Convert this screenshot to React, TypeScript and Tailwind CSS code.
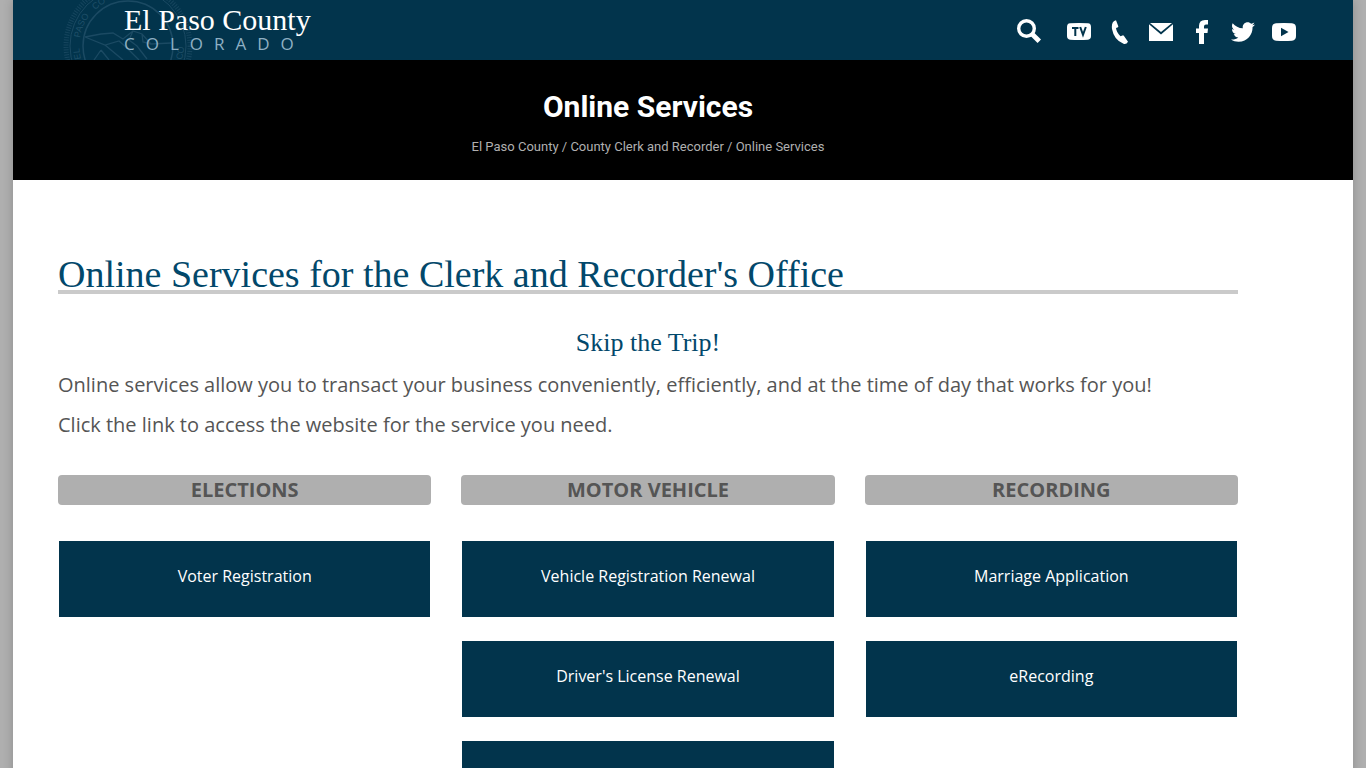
import React from 'react';
import { FaTwitter } from 'react-icons/fa';

const columns = [
  { title: 'ELECTIONS', links: ['Voter Registration'] },
  {
    title: 'MOTOR VEHICLE',
    links: ['Vehicle Registration Renewal', "Driver's License Renewal", ''],
  },
  { title: 'RECORDING', links: ['Marriage Application', 'eRecording'] },
];

function Seal() {
  return (
    <svg
      viewBox="0 0 130 60"
      className="absolute left-[50px] top-0 h-[60px] w-[130px]"
      fill="none"
      stroke="#1b4a63"
      aria-hidden="true"
    >
      <defs>
        <path id="sealEl" d="M18 59 A49 49 0 0 1 17 38" />
        <path id="sealPaso" d="M17 38 A49 49 0 0 1 36 6" />
        <path id="sealCounty" d="M32 10 A49 49 0 0 1 94 6" />
        <path id="sealCo" d="M119 60 A56 56 0 0 0 120 36" />
      </defs>
      <circle cx="65" cy="46" r="62" strokeWidth="5" strokeDasharray="1 1.5" opacity="0.8" />
      <circle cx="65" cy="46" r="58" strokeWidth="1" />
      <circle cx="65" cy="46" r="45" strokeWidth="1.5" />
      <g fill="#1f4f68" stroke="none" fontSize="9" fontFamily="Liberation Sans, sans-serif">
        <text><textPath href="#sealEl">EL</textPath></text>
        <text><textPath href="#sealPaso">PASO</textPath></text>
        <text><textPath href="#sealCounty">CO</textPath></text>
        <text><textPath href="#sealCo">CO</textPath></text>
      </g>
      <path
        d="M22 37 L38 34 L50 33 L60 39 L70 31 L79 34 L88 44 L108 43 M22 37 L42 45 L56 41 L64 48 L76 60 M70 31 L66 40 L74 46 L84 59 M79 34 L80 42 L88 44 M38 50 L31 60 M38 50 L46 60 M42 45 L60 60"
        strokeWidth="1.3"
      />
    </svg>
  );
}

const iconLinks = [
  {
    label: 'Search',
    className: 'w-6',
    icon: (
      <svg viewBox="0 0 24 24" className="size-6 overflow-visible" fill="none" stroke="currentColor" aria-hidden="true">
        <circle cx="9.5" cy="8.5" r="7.8" strokeWidth="3.4" />
        <path d="M15 14 L22.3 21.3" strokeWidth="4.8" />
      </svg>
    ),
  },
  {
    label: 'TV',
    className: 'ml-[26px] w-6',
    icon: (
      <svg viewBox="0 0 24 24" className="size-6" fill="currentColor" aria-hidden="true">
        <path d="M3 3.3 Q12 2.5 21 3.3 Q24 3.6 24 7 V16 Q24 19.4 21 19.7 Q12 20.5 3 19.7 Q0 19.4 0 16 V7 Q0 3.6 3 3.3Z" />
        <path d="M5 8 H11.5 M8.3 8 V16 M13.2 7 L16 14.8 L18.8 7" fill="none" stroke="#02344c" strokeWidth="2" />
      </svg>
    ),
  },
  {
    label: 'Phone',
    className: 'ml-[17px] w-6',
    icon: (
      <svg viewBox="0 0 24 24" className="size-6" fill="currentColor" aria-hidden="true">
        <path d="M8 0.3 L10.3 6.2 Q10.5 7 9.5 7.4 L8 8 Q8.5 12.5 12.5 16.2 L14.5 15.4 Q15.4 15.1 16 15.9 L20 21.8 Q18.5 24.6 15.5 23.8 Q6 20 4 9 Q3 1.5 8 0.3Z" />
      </svg>
    ),
  },
  {
    label: 'Email',
    className: 'ml-[17px] w-6',
    icon: (
      <svg viewBox="0 0 24 24" className="size-6" fill="currentColor" aria-hidden="true">
        <path d="M1 3 H23 L12 12Z" />
        <path d="M0 4.3 L12 14.5 L24 4.3 V21 H0Z" />
      </svg>
    ),
  },
  {
    label: 'Facebook',
    className: 'ml-[17px] w-6',
    icon: (
      <svg viewBox="0 0 24 24" className="size-6" fill="currentColor" aria-hidden="true">
        <path d="M9 24 V13 H6 V8.5 H9 V6 Q9 0 15 0 H18 V4.5 H16 Q14 4.5 14 6.5 V8.5 H18 L17.5 13 H14 V24Z" />
      </svg>
    ),
  },
  { label: 'Twitter', className: 'ml-[17px] w-6', icon: <FaTwitter className="size-6" /> },
  {
    label: 'YouTube',
    className: 'ml-[17px] w-6',
    icon: (
      <svg viewBox="0 0 24 24" className="size-6" aria-hidden="true">
        <path
          d="M4 3.3 Q12 2.7 20 3.3 Q24 3.6 24 8 V16 Q24 20.4 20 20.7 Q12 21.3 4 20.7 Q0 20.4 0 16 V8 Q0 3.6 4 3.3Z"
          fill="currentColor"
        />
        <path d="M9 7.8 L16.5 12 L9 16.2Z" fill="#02344c" />
      </svg>
    ),
  },
];

export default function App() {
  return (
    <div className="min-h-screen bg-[#afafaf] px-[13px] font-['Open_Sans',sans-serif] text-[#555555]">
      <div className="min-h-screen bg-white shadow-[0_0_10px_rgba(0,0,0,0.2)]">
        <header className="relative flex h-[60px] items-start justify-between overflow-hidden bg-[#02344c] pr-[57px] text-white">
          <Seal />
          <a href="#" className="relative ml-[111px] block pt-1">
            <span className="block font-['Liberation_Serif',serif] text-[30px] leading-8">El Paso County</span>
            <span className="block text-[17px] leading-4 tracking-[11px] text-[#8fb0c3]">COLORADO</span>
          </a>
          <nav className="flex pt-5">
            {iconLinks.map((item) => (
              <a key={item.label} href="#" aria-label={item.label} className={item.className}>
                {item.icon}
              </a>
            ))}
          </nav>
        </header>

        <div className="h-[120px] bg-black pt-[27px] pr-[70px] text-center font-['Roboto',sans-serif]">
          <h1 className="text-[30px] leading-10 font-bold text-white">Online Services</h1>
          <nav className="mt-2 text-[13px] leading-6 text-[#b0b0b0]">
            <a href="#">El Paso County</a> / <a href="#">County Clerk and Recorder</a> / <span>Online Services</span>
          </nav>
        </div>

        <main className="pt-[78px] pr-[115px] pb-12 pl-[45px]">
          <h2 className="border-b-4 border-[#cacaca] font-['Liberation_Serif',serif] text-[38px] leading-8 text-[#02486b]">
            Online Services for the Clerk and Recorder's Office
          </h2>
          <h3 className="mt-[33px] text-center font-['Liberation_Serif',serif] text-[26px] leading-8 text-[#02486b]">
            Skip the Trip!
          </h3>
          <p className="mt-2 text-[20px] leading-[36px]">
            Online services allow you to transact your business conveniently, efficiently, and at the time of day that
            works for you!
          </p>
          <p className="mt-1 text-[20px] leading-[36px]">
            Click the link to access the website for the service you need.
          </p>

          <div className="mt-8 grid grid-cols-3 gap-[30px]">
            {columns.map((col) => (
              <section key={col.title}>
                <h4 className="rounded bg-[#afafaf] text-center text-[20px] leading-[30px] font-bold">{col.title}</h4>
                <div className="mt-9 flex flex-col gap-6 px-px">
                  {col.links.map((text) => (
                    <a
                      key={text}
                      href="#"
                      className="block h-[76px] bg-[#02344c] pt-[23px] text-center text-base leading-6 font-medium text-white"
                    >
                      {text}
                    </a>
                  ))}
                </div>
              </section>
            ))}
          </div>
        </main>
      </div>
    </div>
  );
}
